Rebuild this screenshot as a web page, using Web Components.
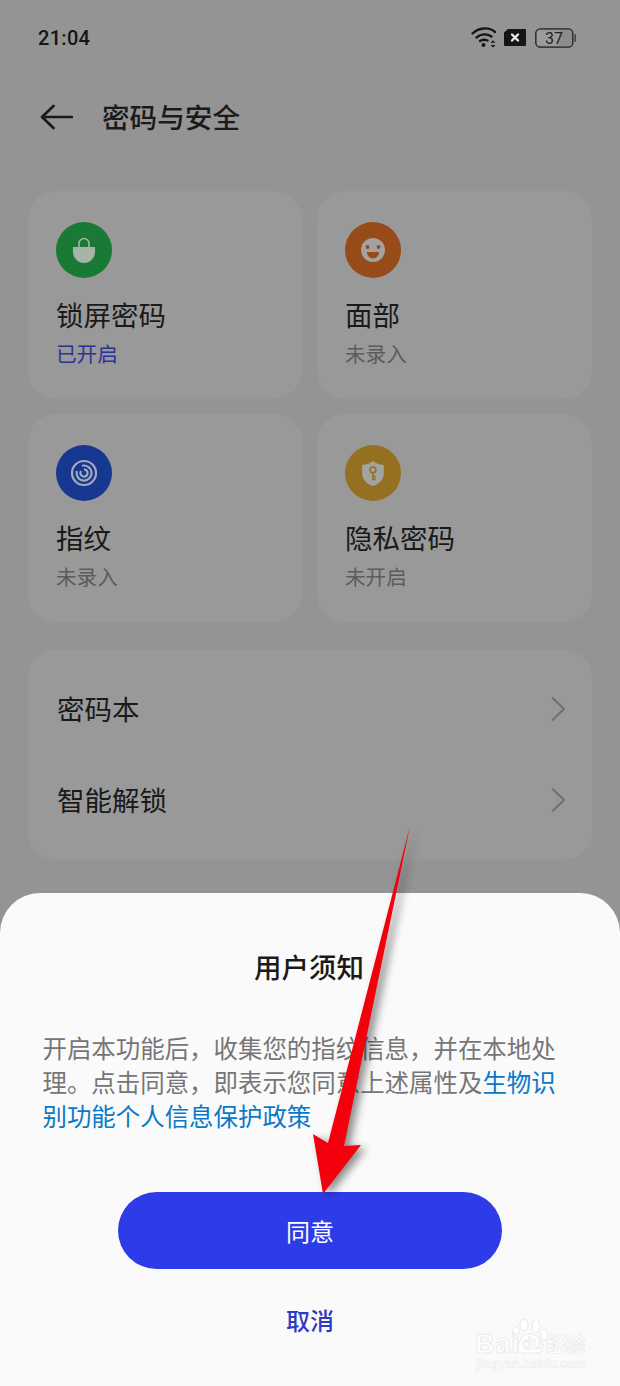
<!DOCTYPE html>
<html lang="zh-CN"><head><meta charset="utf-8"><title>密码与安全</title>
<style>
html,body{margin:0;padding:0;background:#949494}
body{font-family:"Noto Sans CJK SC","Noto Sans",sans-serif;width:620px;height:1386px;overflow:hidden}
</style></head><body>
<security-page></security-page>
<script>
function def(name, html){
  customElements.define(name, class extends HTMLElement{
    connectedCallback(){
      if(this.shadowRoot) return;
      const r=this.attachShadow({mode:'open'});
      r.innerHTML = html;
    }
  });
}
def('status-bar',`<style>
:host{display:flex;align-items:center;justify-content:space-between;height:75px;padding:0 44px 0 38px;box-sizing:border-box;color:#151515}
.t{font:500 20px/1 Roboto,sans-serif;letter-spacing:.3px}
.r{display:flex;align-items:center}
</style><span class="t">21:04</span><span class="r">
<svg width="106" height="26" viewBox="0 0 106 26">
<g fill="none" stroke="#151515" stroke-width="2.4" stroke-linecap="round"><path d="M2.500 8.500C9 2 19.500 2 25 7"/><path d="M6.500 12.500C11 8.500 17 8.500 21.500 11.500"/><path d="M10 16C12 14.500 15 14.500 17.500 15.500"/></g>
<circle cx="13.500" cy="20" r="2" fill="#151515"/>
<path d="M20.500 17.800h5l-2.500-2.500zM20.500 20h5l-2.500 2.500z" fill="#151515"/>
<path d="M34 7.500l4-3.500h17a1 1 0 0 1 1 1v15a1 1 0 0 1-1 1H35a1 1 0 0 1-1-1z" fill="#151515"/>
<path d="M42 9.500l6 6M48 9.500l-6 6" stroke="#e8e8e8" stroke-width="2.400" stroke-linecap="round"/>
<rect x="65.800" y="3.800" width="37" height="18.400" rx="4.500" fill="#8c8c8c" stroke="#222" stroke-width="1.300"/>
<path d="M70 5.500h19v15H70a3 3 0 0 1-3-3v-9a3 3 0 0 1 3-3z" fill="#9c9c9c"/>
<rect x="104.500" y="9" width="1.500" height="8" rx=".7" fill="#444"/>
<text x="84" y="19" text-anchor="middle" font-family="Roboto,sans-serif" font-size="16" fill="#222">37</text>
</svg></span>`);
def('title-bar',`<style>
:host{display:flex;align-items:center;height:84px;padding:0 0 0 40px;box-sizing:border-box;margin-bottom:32px}
svg{display:block;margin-right:29px}
span{font-size:27.600px;line-height:1;color:#1a1a1a;font-weight:500;white-space:nowrap}
</style><svg width="33" height="26" viewBox="0 0 33 26"><path d="M32 13H2M13.500 2L2 13l11.500 11" fill="none" stroke="#1a1a1a" stroke-width="2.700" stroke-linecap="round" stroke-linejoin="round"/></svg><span><slot></slot></span>`);
def('feature-card',`<style>
:host{display:flex;flex-direction:column;align-items:flex-start;box-sizing:border-box;height:208px;background:#999;border-radius:28px;padding:31px 28px 0 28px}
.ic{width:56px;height:56px;border-radius:50%;display:flex;align-items:center;justify-content:center;background:var(--c)}
.n{font-size:27.500px;line-height:34px;color:#1a1a1a;margin-top:19px;white-space:nowrap}
.s{font-size:20.600px;line-height:26px;margin-top:9px;color:var(--sub,#5c5c5c);white-space:nowrap}
</style><div class="ic"><slot name="icon"></slot></div><div class="n"><slot name="name"></slot></div><div class="s"><slot name="sub"></slot></div>`);
def('list-row',`<style>
:host{display:flex;align-items:center;justify-content:space-between;height:91px;padding:0 26px 0 29px;font-size:27.500px;color:#1a1a1a}
span{display:block;margin-top:-3px}
svg{display:block;margin-top:-1px}
</style><span><slot></slot></span><svg width="16" height="26" viewBox="0 0 16 26"><path d="M2 1.500L14 13 2 24.500" fill="none" stroke="#6f6f6f" stroke-width="2"/></svg>`);
def('list-card',`<style>
:host{display:block;box-sizing:border-box;height:210px;margin:28px 28px 0;background:#999;border-radius:28px;padding:14px 0}
</style><slot></slot>`);
def('card-grid',`<style>
:host{display:grid;grid-template-columns:274px 275px;gap:15px;padding:0 28px}
</style><slot></slot>`);
def('baidu-mark',`<style>
:host{position:absolute;left:474px;top:1318px;width:122px;height:60px;pointer-events:none}
.b{position:absolute;left:1px;top:11px;font:700 27px/30px "Liberation Sans",sans-serif;color:#fff;-webkit-text-stroke:1px #ebebeb;letter-spacing:1px}
.d{position:absolute;left:48px;top:16px;font:700 16px/20px "Liberation Sans",sans-serif;color:#fff;-webkit-text-stroke:.8px #ebebeb}
.j{position:absolute;left:2px;top:39px;font:700 12.500px/14px "Liberation Sans",sans-serif;color:#fff;-webkit-text-stroke:.6px #ebebeb;white-space:nowrap}
.z{position:absolute;left:72px;top:14px;font:700 20px/24px "Noto Sans CJK SC",sans-serif;color:#fff;-webkit-text-stroke:.7px #e9e9e9;white-space:nowrap;letter-spacing:-.5px}
svg{position:absolute;left:37px;top:0}
</style><svg width="40" height="36" viewBox="0 0 40 36" fill="#fff" stroke="#ebebeb" stroke-width="1.100"><ellipse cx="13" cy="7" rx="4" ry="6"/><ellipse cx="25" cy="8" rx="4" ry="6.500"/><ellipse cx="5" cy="15" rx="3.500" ry="5.500"/><ellipse cx="33" cy="17" rx="3.500" ry="5.500"/><path d="M7 30c0-9 6-14 12-14s13 5 13 14c0 6-8 5-13 5S7 36 7 30z"/></svg><span class="b">Bai</span><span class="d">du</span><span class="z">经验</span><span class="j">jingyan.baidu.com</span>`);
def('notice-sheet',`<style>
:host{position:absolute;left:0;right:0;top:893px;bottom:0;background:#fafafa;border-radius:40px 40px 0 0;display:flex;flex-direction:column;align-items:center;box-sizing:border-box;padding-top:54px}
h2{margin:0;font-size:27.500px;line-height:38px;font-weight:500;color:#1a1a1a;transform:translateX(-1px)}
p{margin:46px 0 0;width:536px;font-size:24.450px;line-height:34px;color:#767676;padding-left:1px;box-sizing:content-box}
button{display:block;border:0;font-family:inherit;padding:0}
.ok{margin-top:59px;width:384px;height:77px;border-radius:39px;background:#2d3ce8;color:#fff;font-size:24px}
.no{margin-top:33px;width:120px;height:36px;background:none;color:#2d3bc4;font-size:24px;font-weight:500;line-height:36px}
</style><h2><slot name="title"></slot></h2><p><slot name="body"></slot></p><button class="ok"><slot name="ok"></slot></button><button class="no"><slot name="cancel"></slot></button>`);
def('red-arrow',`<style>
:host{position:absolute;left:0;top:0;width:620px;height:1386px;pointer-events:none}
svg{display:block;filter:drop-shadow(5px 3px 4px rgba(0,0,0,.45))}
</style><svg width="620" height="1386" viewBox="0 0 620 1386"><path d="M410 826L344 1146L361 1145L323 1194L313 1134L328 1143Z" fill="#f4000c"/></svg>`);
def('security-page',`<style>
:host{display:block;position:relative;width:620px;height:1386px;overflow:hidden;background:#949494}
a{color:#0a78c8;text-decoration:none}
</style>
<status-bar></status-bar>
<title-bar>密码与安全</title-bar>
<card-grid>
<feature-card style="--c:#197a35;--sub:#2b3398">
<svg slot="icon" width="26" height="28" viewBox="0 0 26 28"><path d="M8 11V7.500a5 5 0 0 1 10 0V11" fill="none" stroke="#a6b3a8" stroke-width="1.600"/><path d="M2 11h22v5a11 11 0 0 1-22 0z" fill="#a6b3a8"/></svg>
<span slot="name">锁屏密码</span><span slot="sub">已开启</span></feature-card>
<feature-card style="--c:#964b19">
<svg slot="icon" width="30" height="30" viewBox="0 0 30 30"><circle cx="15" cy="15" r="12" fill="#a2a2a2"/><circle cx="9.500" cy="12" r="1.900" fill="#964b19"/><circle cx="20.500" cy="12" r="1.900" fill="#964b19"/><path d="M9 17h12c0 4-2.800 6.500-6 6.500S9 21 9 17z" fill="#964b19"/></svg>
<span slot="name">面部</span><span slot="sub">未录入</span></feature-card>
<feature-card style="--c:#173890">
<svg slot="icon" width="30" height="30" viewBox="0 0 30 30" fill="none" stroke="#a4aaba" stroke-width="2.200"><circle cx="15" cy="15" r="12"/><path d="M13 7.800A7.500 7.500 0 1 1 7.800 13"/><path d="M12 13a3.600 3.600 0 1 0 3-1.600"/></svg>
<span slot="name">指纹</span><span slot="sub">未录入</span></feature-card>
<feature-card style="--c:#957020">
<svg slot="icon" width="24" height="27" viewBox="0 0 26 30"><path d="M13 1c3 2.500 7 4 12 4.500V15c0 7-5 11.500-12 14C6 26.500 1 22 1 15V5.500C6 5 10 3.500 13 1z" fill="#a3a3a3"/><circle cx="13" cy="11" r="3.200" fill="none" stroke="#957020" stroke-width="1.800"/><path d="M13 14v8.500M13 18.500h3M13 21.500h3" fill="none" stroke="#957020" stroke-width="1.800"/></svg>
<span slot="name">隐私密码</span><span slot="sub">未开启</span></feature-card>
</card-grid>
<list-card><list-row>密码本</list-row><list-row>智能解锁</list-row></list-card>
<notice-sheet>
<span slot="title">用户须知</span>
<span slot="body">开启本功能后，收集您的指纹信息，并在本地处理。点击同意，即表示您同意上述属性及<a href="#">生物识别功能个人信息保护政策</a></span>
<span slot="ok">同意</span><span slot="cancel">取消</span>
</notice-sheet>
<baidu-mark></baidu-mark>
<red-arrow></red-arrow>`);
</script>
</body></html>
